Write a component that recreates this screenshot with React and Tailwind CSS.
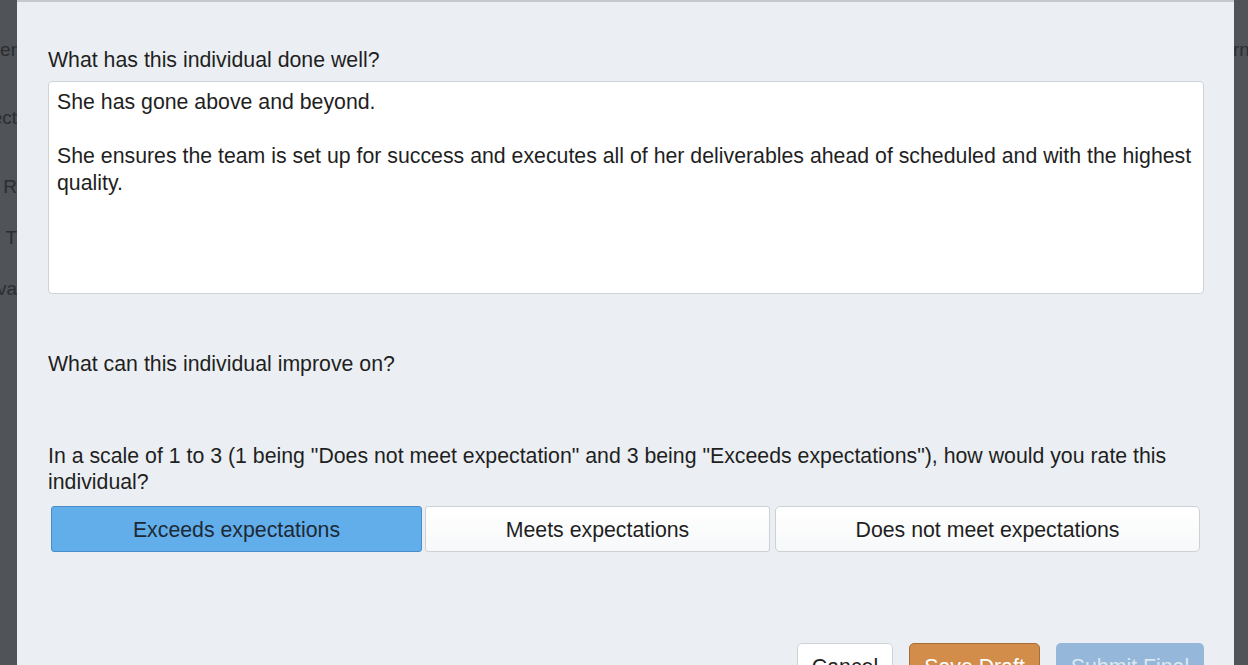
import React, { useState } from "react";

const ratings = [
  { label: "Exceeds expectations", w: "w-[371px]" },
  { label: "Meets expectations", w: "w-[345px]" },
  { label: "Does not meet expectations", w: "w-[425px]" },
];

const BgText = ({ children, className }) => (
  <div className={`text-[19px] leading-[20px] text-[#2c2e31] whitespace-nowrap ${className}`}>{children}</div>
);

export default function App() {
  const [rating, setRating] = useState(0);

  return (
    <div
      className="h-[665px] w-[1248px] overflow-hidden bg-[#505357] flex"
      style={{ fontFamily: '"Liberation Sans", Arial, sans-serif' }}
    >
      {/* page behind the overlay */}
      <div className="w-[17px] shrink-0 overflow-hidden flex flex-col items-end pt-[40px]">
        <BgText>er</BgText>
        <BgText className="mt-[48px]">ect</BgText>
        <BgText className="mt-[49px]">R</BgText>
        <BgText className="mt-[31px]">T</BgText>
        <BgText className="mt-[31px]">va</BgText>
      </div>

      {/* modal */}
      <div className="w-[1217px] shrink-0 h-full bg-[#ebeff3] border-t-2 border-[#c5c9ce] px-[31px] pt-[45px] text-[#1f1f1f] text-[21.3px]">
        <div className="w-[1156px]">
          <label className="block leading-[27px]">What has this individual done well?</label>
          <div className="mt-[7px] h-[213px] bg-white border border-[#cfd3d7] rounded-[4px] pl-[8px] pr-[4px] pt-[7px] leading-[27px] whitespace-nowrap">
            <p>She has gone above and beyond.</p>
            <p className="mt-[27px]">
              She ensures the team is set up for success and executes all of her deliverables ahead of scheduled and
              with the highest
              <br />
              quality.
            </p>
          </div>

          <label className="block mt-[57px] leading-[27px]">What can this individual improve on?</label>

          <p className="mt-[65px] leading-[26px]">
            In a scale of 1 to 3 (1 being "Does not meet expectation" and 3 being "Exceeds expectations"), how would
            you rate this
            <br />
            individual?
          </p>

          <div className="mt-[11px] ml-[3px] flex gap-[3px]">
            {ratings.map((r, i) => (
              <button
                key={r.label}
                onClick={() => setRating(i)}
                className={`${r.w} h-[46px] pt-[3px] rounded-[3px] border text-[21.3px] ${
                  rating === i
                    ? "bg-[#62aeea] border-[#4a8ec9] text-[#1d2a36]"
                    : "bg-gradient-to-b from-white to-[#f7f8f9] border-[#cdd1d5] text-[#1f1f1f]"
                } ${i === 2 ? "ml-[2px] rounded-[5px]" : ""}`}
              >
                {r.label}
              </button>
            ))}
          </div>

          <div className="mt-[91px] flex justify-end gap-[16px]">
            <button className="w-[96px] h-[40px] bg-white border border-[#cfd3d7] rounded-[5px] text-[21.3px] text-[#1f1f1f] pt-[8px] leading-[27px] self-start">
              Cancel
            </button>
            <button className="w-[131px] h-[40px] bg-[#d38d4b] border border-[#a86d36] rounded-[5px] text-[21.3px] text-white pt-[8px] leading-[27px] self-start">
              Save Draft
            </button>
            <button className="w-[148px] h-[40px] bg-[#95b7d9] rounded-[5px] text-[21.3px] text-[#dce8f3] pt-[8px] leading-[27px] self-start">
              Submit Final
            </button>
          </div>
        </div>
      </div>

      <div className="flex-1 overflow-hidden pt-[40px]">
        <BgText className="-ml-[1px]">rn</BgText>
      </div>
    </div>
  );
}
